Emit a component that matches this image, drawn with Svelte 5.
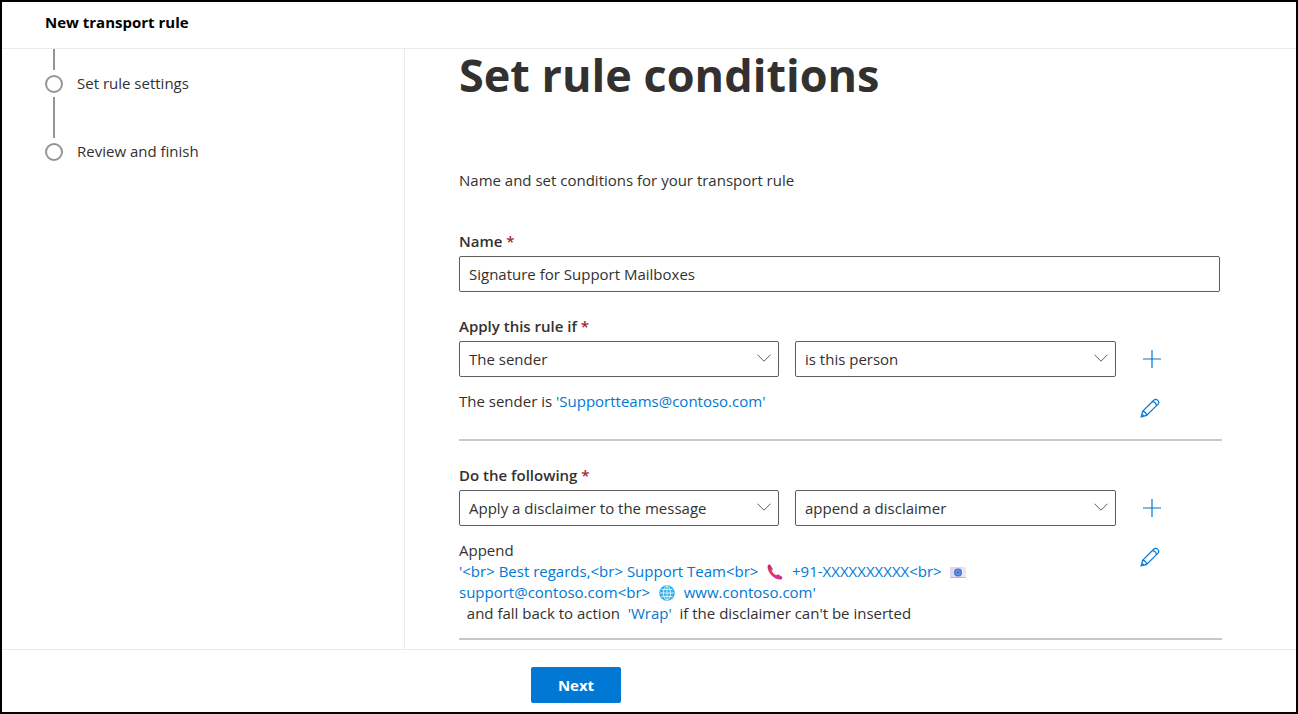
<script>
  const steps = ['Set rule settings', 'Review and finish'];

  let name = $state('Signature for Support Mailboxes');
  let subject = $state('The sender');
  let match = $state('is this person');
  let action = $state('Apply a disclaimer to the message');
  let detail = $state('append a disclaimer');
</script>

{#snippet chevron()}
  <svg class="chevron" viewBox="0 0 14 8" aria-hidden="true">
    <path d="M.5.7 7 7.2 13.5.7" />
  </svg>
{/snippet}

{#snippet plus()}
  <svg class="icon" viewBox="0 0 20 20" aria-hidden="true">
    <path d="M10 1v18M1 10h18" />
  </svg>
{/snippet}

{#snippet pencil()}
  <svg class="icon" viewBox="0 0 20 20" aria-hidden="true">
    <path d="M1.2 18.8 2.6 13.4 13.7 2.3a2.9 2.9 0 0 1 4.1 4.1L6.6 17.4zM2.6 13.4c2 .1 3.700 1.800 4 4M12.300 3.700c2.200.2 3.800 1.800 4.100 4.100M2 16.200 3.800 18" />
  </svg>
{/snippet}

<div class="frame">
  <header>New transport rule</header>

  <div class="body">
    <nav aria-label="Steps">
      <ol>
        {#each steps as step}
          <li>
            <span class="line"></span>
            <span class="dot"></span>
            <span>{step}</span>
          </li>
        {/each}
      </ol>
    </nav>

    <main>
      <h1>Set rule conditions</h1>
      <p class="intro">Name and set conditions for your transport rule</p>

      <div class="field">
        <label for="name">Name <span class="req">*</span></label>
        <input id="name" type="text" bind:value={name} />
      </div>

      <section>
        <label for="subject">Apply this rule if <span class="req">*</span></label>
        <div class="row">
          <div class="select">
            <select id="subject" bind:value={subject}><option>The sender</option></select>
            {@render chevron()}
          </div>
          <div class="select">
            <select aria-label="Condition" bind:value={match}><option>is this person</option></select>
            {@render chevron()}
          </div>
          <button class="tool" aria-label="Add condition">{@render plus()}</button>
        </div>
        <div class="row summary">
          <p>The sender is <a href="#sender">'Supportteams@contoso.com'</a></p>
          <button class="tool" aria-label="Edit condition">{@render pencil()}</button>
        </div>
      </section>

      <section>
        <label for="action">Do the following <span class="req">*</span></label>
        <div class="row">
          <div class="select">
            <select id="action" bind:value={action}><option>Apply a disclaimer to the message</option></select>
            {@render chevron()}
          </div>
          <div class="select">
            <select aria-label="Action detail" bind:value={detail}><option>append a disclaimer</option></select>
            {@render chevron()}
          </div>
          <button class="tool" aria-label="Add action">{@render plus()}</button>
        </div>
        <div class="row summary">
          <div class="text">
            <p>Append</p>
            <a href="#disclaimer">
              '&lt;br&gt; Best regards,&lt;br&gt; Support Team&lt;br&gt;&nbsp;
              <svg class="emoji" viewBox="0 0 16 16" aria-hidden="true">
                <defs>
                  <linearGradient id="phone" x1="0" y1="0" x2="1" y2="1">
                    <stop offset="0" stop-color="#a82878" />
                    <stop offset=".35" stop-color="#f03a58" />
                    <stop offset="1" stop-color="#c030b0" />
                  </linearGradient>
                </defs>
                <path fill="url(#phone)" d="M.6 2.200C.8 1 2.200.2 3.200.8L5.600 4.400C6 5.300 5.300 6 4.700 6.600c.8 2 2.200 3.500 4.400 4.700.7-.8 1.600-1.200 2.500-.7l3.300 2.200c1 .9.2 2.700-1 2.800C7.300 16 .2 8.800.6 2.200z" />
              </svg>&nbsp;
              +91-XXXXXXXXXX&lt;br&gt;&nbsp;
              <svg class="emoji" viewBox="0 0 16 16" aria-hidden="true">
                <path fill="#e4d3f1" d="M0 3h16v11H0z" />
                <path fill="#f0e5f5" d="M12 3h4v11h-4z" />
                <path fill="#d0aee5" d="M0 13h16v1H0z" />
                <circle cx="8" cy="8.500" r="4" fill="#437bd2" />
                <circle cx="8" cy="8.500" r="2" fill="#5d68c4" stroke="#6fa4e4" />
              </svg>
              <br />
              support@contoso.com&lt;br&gt;&nbsp;
              <svg class="emoji" viewBox="0 0 16 16" aria-hidden="true">
                <circle cx="8" cy="8" r="7.800" fill="#35aee8" />
                <g fill="none" stroke="#d6f4ff">
                  <ellipse cx="8" cy="8" rx="3.500" ry="7" />
                  <path d="M8 1v14M1 8h14M2.500 4.500h11M2.500 11.500h11" />
                </g>
              </svg>&nbsp;
              www.contoso.com'
            </a>
            <p>&nbsp; and fall back to action&nbsp; <a href="#fallback">'Wrap'</a>&nbsp; if the disclaimer can't be inserted</p>
          </div>
          <button class="tool" aria-label="Edit action">{@render pencil()}</button>
        </div>
      </section>
    </main>
  </div>

  <footer>
    <button class="next">Next</button>
  </footer>
</div>

<style>
  .frame {
    display: grid;
    grid-template-rows: auto 1fr auto;
    box-sizing: border-box;
    min-height: 100vh;
    border: 2px solid #000;
    background: #fff;
    color: #323130;
    font: 15px/21px "Open Sans", "Segoe UI", sans-serif;
  }

  header {
    padding: 10px 43px 15px;
    border-bottom: 1px solid #eaeaea;
    color: #000;
    font-weight: 700;
  }

  .body {
    display: grid;
    grid-template-columns: 402px 1fr;
  }

  nav {
    padding-left: 43px;
  }

  ol {
    margin: 0;
    padding: 0;
    list-style: none;
  }

  li {
    display: grid;
    grid-template-columns: 18px 1fr;
    column-gap: 14px;
    row-gap: 3px;
    align-items: center;
    margin-bottom: 3px;
  }

  .line {
    grid-column: 1 / -1;
    width: 2px;
    height: 41px;
    margin-left: 8px;
    background: #979593;
  }

  li:first-child .line {
    height: 21px;
  }

  .dot {
    box-sizing: border-box;
    width: 18px;
    height: 18px;
    border: 2px solid #979593;
    border-radius: 50%;
  }

  main {
    padding: 0 74px 9px 54px;
    border-left: 1px solid #eaeaea;
  }

  h1 {
    margin: 0;
    font-size: 45px;
    line-height: 52px;
    font-weight: 700;
  }

  p {
    margin: 0;
  }

  .intro {
    margin: 69px 0 40px;
  }

  label {
    display: block;
    margin-bottom: 4px;
    font-weight: 600;
  }

  .req {
    color: #a4262c;
  }

  .field {
    margin: 0 2px 24px 0;
  }

  input,
  select {
    box-sizing: border-box;
    width: 100%;
    height: 36px;
    padding: 0 9px;
    border: 1px solid #605e5c;
    border-radius: 2px;
    background: #fff;
    color: inherit;
    font: inherit;
    appearance: none;
  }

  .row {
    display: grid;
    grid-template-columns: 320fr 321fr 90px;
    column-gap: 16px;
  }

  .select {
    display: grid;
    align-items: center;
  }

  .select > :global(*) {
    grid-area: 1 / 1;
  }

  .chevron {
    justify-self: end;
    width: 14px;
    height: 8px;
    margin: 0 8px 2px 0;
    pointer-events: none;
    fill: none;
    stroke: #605e5c;
  }

  .tool {
    display: grid;
    place-items: center;
    width: 40px;
    height: 36px;
    padding: 0;
    border: 0;
    background: none;
  }

  .icon {
    width: 20px;
    height: 20px;
    fill: none;
    stroke: #0078d4;
    stroke-width: 1.2;
  }

  section {
    margin-bottom: 24px;
    border-bottom: 2px solid #c8c8c8;
  }

  section:last-child {
    margin-bottom: 0;
  }

  .summary {
    padding: 14px 0;
  }

  .summary > :first-child {
    grid-column: 1 / 3;
  }

  .summary .tool {
    width: 36px;
    height: 34px;
  }

  a {
    color: #0078d4;
    text-decoration: none;
  }

  .emoji {
    width: 16px;
    height: 16px;
    margin: 0 1px;
    vertical-align: -3px;
  }

  footer {
    padding: 17px 0 9px 529px;
    border-top: 1px solid #eaeaea;
  }

  .next {
    width: 90px;
    height: 36px;
    border: 0;
    border-radius: 2px;
    background: #0078d4;
    color: #fff;
    font: inherit;
    font-weight: 700;
  }
</style>
